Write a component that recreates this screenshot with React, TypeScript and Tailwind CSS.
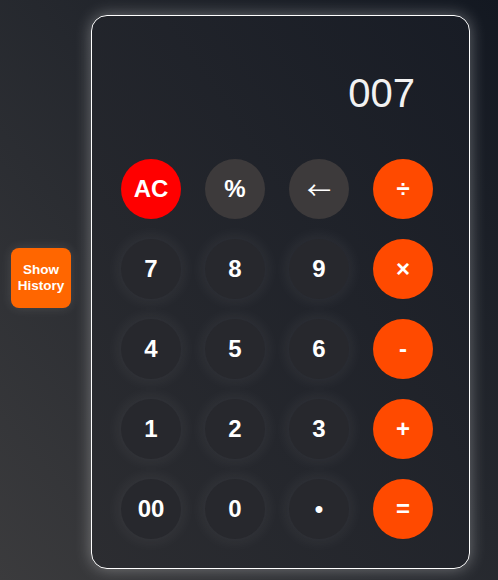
import React, { useState } from 'react';

type Key = { label: string; kind: 'num' | 'op' | 'fn' | 'clear' };

const KEYS: Key[] = [
  { label: 'AC', kind: 'clear' },
  { label: '%', kind: 'fn' },
  { label: '←', kind: 'fn' },
  { label: '÷', kind: 'op' },
  { label: '7', kind: 'num' },
  { label: '8', kind: 'num' },
  { label: '9', kind: 'num' },
  { label: '×', kind: 'op' },
  { label: '4', kind: 'num' },
  { label: '5', kind: 'num' },
  { label: '6', kind: 'num' },
  { label: '-', kind: 'op' },
  { label: '1', kind: 'num' },
  { label: '2', kind: 'num' },
  { label: '3', kind: 'num' },
  { label: '+', kind: 'op' },
  { label: '00', kind: 'num' },
  { label: '0', kind: 'num' },
  { label: '•', kind: 'num' },
  { label: '=', kind: 'op' },
];

const styles = {
  num: 'bg-[#27282d] shadow-[0_0_18px_rgba(255,255,255,0.09)]',
  op: 'bg-[#ff4a00]',
  fn: 'bg-[#3d3a3b]',
  clear: 'bg-[#ff0000]',
};

const App: React.FC = () => {
  const [display] = useState('007');

  return (
    <div className="flex h-[580px] w-full items-start bg-gradient-to-bl from-[#131821] to-[#3b3b3d] pl-[11px] font-['Liberation_Sans',Arial,sans-serif]">
      {/* History toggle */}
      <button className="mt-[248px] flex h-[60px] w-[60px] items-center justify-center rounded-lg bg-[#ff6600] text-[13.5px] font-bold leading-[16px] text-white shadow-[0_0_12px_rgba(255,255,255,0.12)]">
        Show
        <br />
        History
      </button>

      {/* Calculator */}
      <div className="ml-[20px] mt-[15px] h-[554px] w-[379px] rounded-2xl border border-white bg-gradient-to-bl from-[#181c25] to-[#2c2d31] pl-[29px] pr-[36px] pt-[55px] shadow-[0_0_16px_rgba(255,255,255,0.35)]">
        <div className="pr-[18px] text-right text-[40px] leading-[45px] text-[#f2f2f2]">{display}</div>

        <div className="mt-[43px] grid grid-cols-[repeat(4,60px)] gap-x-[24px] gap-y-[20px]">
          {KEYS.map((k) => (
            <button
              key={k.label}
              className={`flex h-[60px] w-[60px] items-center justify-center rounded-full text-2xl text-white ${
                k.label === '←' ? "font-['Noto_Sans_CJK_SC',sans-serif] font-normal" : 'font-bold'
              } ${styles[k.kind]}`}
            >
              {k.label}
            </button>
          ))}
        </div>
      </div>
    </div>
  );
};

export default App;
